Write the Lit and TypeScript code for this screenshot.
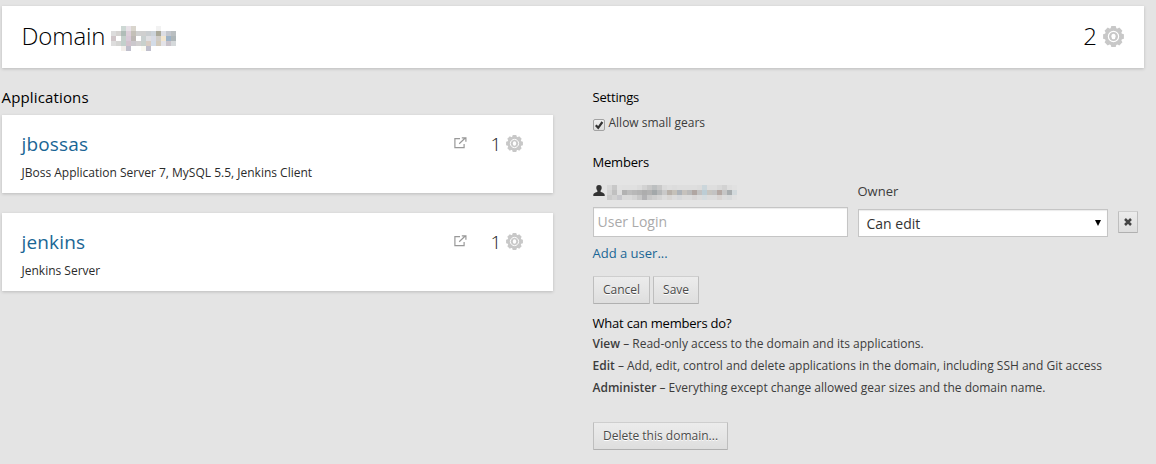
import { LitElement, html, css, svg } from "lit";
import { customElement, property } from "lit/decorators.js";

const MOSAIC_DOMAIN = [
  ". . cdd8d4 e8e2e8 d9d5cd . . . . f2f2f2 . . .",
  "dcdcdc d5d3d1 b0bdb8 dccfd9 c4c0b8 d0d0d0 cfcfcf c9cdd0 ccd3da aba99a dcdde4 c3c6cd b9bec0",
  "d0c6c9 . c5d0cb d8cad8 bdb8b5 . c9d0d0 dfdfe2 d8dbe5 d0cdc8 f3e6cf 9db3c8 aeb6b8",
  "dddddd d5d5d3 c3d0cc d3c3cd cbc8cd d2d0d0 c8d0cc d8ccc3 d3dce8 d3cbbd e3e3e8 c9c3ca d5d9db",
  ". . f3efeb c0bfcc . . fbfaf2 c0bfcc . . . . .",
];
const MOSAIC_USER = [
  "d9d9d9 c8c8c8 e1e1e1 e0e0e0 e0e0e0 e0e0e0 dcdcdc d2d2d2 c8c8c8 bcbfc0 c8c8c8 dadada dedede dcdcdc dedede dedede dedede dedede dcdcdc cbd6db dedede dedede d9d9d9 d2d2d2 dedede e1e1e1",
  "d4d4d4 c0c0c0 dedede b2b2b2 bdbdbd b8b8b8 b4b4b4 adadad b2b2b2 a3a8aa b6b8b9 c9c9c9 b8b1aa c5c1b9 adb3b9 c6c2bd bababa b0a6a2 c2c2c2 bccdd5 c7c5c0 c3c3c3 b4a8a3 c6c6c6 a8adaf d2d9dc",
  "cbcbcb d2d2d2 c8c8cc dadada dadada d4d4d4 c8c8c8 b2b2b4 c8c8c8 cecece d4d4d4 dcdcdc d8d6d4 dcdcdc d6d8da dcdcdc dcdcdc d8d6d6 dcdcdc d5dcdf dcdcdc dcdcdc d8d4d2 dcdcdc d8dadb e1e1e1",
];

@customElement("mosaic-text")
class MosaicText extends LitElement {
  @property({ attribute: false }) rows: string[] = [];
  @property({ type: Number }) cell = 5;
  static styles = css`:host { display: block; } svg { display: block; }`;
  render() {
    const grid = this.rows.map((r) => r.split(" "));
    const c = this.cell;
    return html`<svg width=${(grid[0]?.length ?? 0) * c} height=${grid.length * c} shape-rendering="crispEdges">
      ${grid.map((r, y) => r.map((f, x) => f === "." ? null : svg`<rect x=${x * c} y=${y * c} width=${c} height=${c} fill=${"#" + f}></rect>`))}
    </svg>`;
  }
}

const gear = (size: number) => html`<svg class="gear" width=${size} height=${size} viewBox="-10.5 -10.5 21 21">
  <g fill="#c8c8c8">
    ${[0, 45, 90, 135].map((a) => svg`<path d="M-2.2-10.4H2.2L3.2-7V7L2.2 10.4H-2.2L-3.2 7V-7Z" transform="rotate(${a})"></path>`)}
  </g>
  <circle r="8.7" fill="#c8c8c8"></circle>
  <circle r="5.1" fill="#c8c8c8" stroke="#fff" stroke-width="1.2"></circle>
  <ellipse rx="2.1" ry="2.7" fill="#fff"></ellipse>
</svg>`;

@customElement("app-root")
class AppRoot extends LitElement {
  static styles = css`
    :host { display: block; box-sizing: border-box; height: 464px; overflow: hidden; background: #e4e4e4; padding: 6px 12px 0 2px; color: #3c3c3c; font: 12px/22px "Open Sans", sans-serif; text-indent: -.5px; }
    * { box-sizing: border-box; }
    .card { background: #fff; box-shadow: 0 1px 3px rgba(0, 0, 0, .18); }
    .header { height: 62px; display: flex; align-items: center; padding: 0 20px 2px; color: #000; font-size: 24px; font-weight: 300; line-height: 30px; }
    .title { width: 83px; letter-spacing: -.1px; }
    .header mosaic-text { margin: 5px auto 0 6px; }
    .gear { display: block; flex: none; }
    .header .gear { margin-left: 6px; }
    .total { text-indent: .5px; }
    .columns { display: grid; grid-template-columns: 551px 1fr; column-gap: 40px; }
    h2 { margin: 0; font-weight: 400; color: #000; }
    .left h2 { font-size: 15px; line-height: 20px; margin: 19px 0 8px; letter-spacing: .15px; }
    .app { height: 78px; padding: 16px 30px 0 20px; margin-bottom: 20px; }
    .row { display: flex; align-items: center; height: 25px; }
    .name { font-size: 19px; color: #1a6695; margin-right: auto; letter-spacing: .15px; }
    .link { margin-top: -1px; }
    .count { font-size: 19px; font-weight: 300; color: #222; width: 10px; margin: 0 6px 0 23px; text-indent: .5px; }
    .stack { line-height: 18px; margin-top: 8px; color: #2b2b2b; }
    .right h2 { font-size: 13px; line-height: 20px; letter-spacing: -.2px; }
    .settings { margin-top: 19px !important; }
    .check { display: flex; align-items: flex-start; height: 20px; margin: 5px 0 20px; line-height: 22px; }
    .box { width: 12px; height: 12px; margin: 7px 4px 0 0; border: 1px solid #a2a2a2; border-radius: 2px; background: linear-gradient(#efefef, #ddd); }
    .box svg { display: block; overflow: visible; }
    .members { display: grid; grid-template-columns: 255px 250px 20px; column-gap: 10px; align-items: center; }
    .user { display: flex; height: 35px; padding-top: 13px; }
    .user mosaic-text { margin: 0 0 0 2px; }
    .owner { font-size: 13px; height: 35px; padding-top: 8px; line-height: 22px; }
    .field { background: #fff; border: 1px solid #c5c5c5; box-shadow: inset 0 1px 1px rgba(0,0,0,.08); height: 30px; font-size: 14px; line-height: 28px; padding-left: 4px; color: #aaa; }
    .select { height: 28px; line-height: 28px; padding: 0 6px 0 8px; color: #333; display: flex; justify-content: space-between; margin-top: 1px; }
    .arrow { margin-top: 10px; }
    .btn { display: inline-flex; align-items: center; justify-content: center; height: 28px; padding: 0 9px; border: 1px solid #bebebe; border-top-color: #cecece; border-bottom-color: #b0b0b0; border-radius: 1px; background: linear-gradient(#ececec, #dedede); color: #4a4a4a; text-shadow: 0 1px 0 #fff; text-indent: 0; }
    .x { width: 20px; height: 22px; padding: 0; }
    .add { display: block; font-size: 13px; color: #1a6695; line-height: 20px; margin: 6px 0 13px; }
    .actions { display: flex; gap: 3px; }
    .help { margin-top: 9px !important; }
    p { margin: 0; white-space: nowrap; }
    b { font-weight: 600; }
    .delete { margin-top: 23px; }
  `;

  private apps = [
    { name: "jbossas", stack: "JBoss Application Server 7, MySQL 5.5, Jenkins Client" },
    { name: "jenkins", stack: "Jenkins Server" },
  ];

  render() {
    return html`
      <div class="card header"><span class="title">Domain</span><mosaic-text .rows=${MOSAIC_DOMAIN}></mosaic-text><span class="total">2</span>${gear(21)}</div>
      <div class="columns">
        <div class="left">
          <h2>Applications</h2>
          ${this.apps.map((a) => html`<div class="card app">
            <div class="row"><span class="name">${a.name}</span>
              <svg class="link" width="13" height="12" viewBox="0 0 13 12" fill="none" stroke="#999" stroke-width="1.2"><path d="M6 1.6H.9V10.6H10.1V7M5.2 6.8L11.2 1M7.8.8H11.9V4.7"></path></svg>
              <span class="count">1</span>${gear(17)}</div>
            <div class="stack">${a.stack}</div>
          </div>`)}
        </div>
        <div class="right">
          <h2 class="settings">Settings</h2>
          <div class="check"><span class="box"><svg width="10" height="10"><path d="M1.8 5.2L4.2 7.8L8.4 2" fill="none" stroke="#333" stroke-width="2.2"></path></svg></span>Allow small gears</div>
          <h2>Members</h2>
          <div class="members">
            <div class="user"><svg width="12" height="11" viewBox="0 0 12 11"><path d="M6 0C8 0 8.8 1.3 8.7 3C8.6 4.6 7.9 5.3 7.4 6C7.3 7.5 11.7 7.3 11.7 10V11H.3V10C.3 7.3 4.7 7.5 4.6 6C4.1 5.3 3.4 4.6 3.3 3C3.2 1.3 4 0 6 0Z" fill="#333"></path></svg><mosaic-text .rows=${MOSAIC_USER}></mosaic-text></div>
            <div class="owner">Owner</div><span></span>
            <div class="field">User Login</div>
            <div class="field select">Can edit<svg class="arrow" width="6" height="6"><path d="M0 0H6L3 6Z" fill="#000"></path></svg></div>
            <div class="btn x"><svg width="8" height="8" viewBox="0 0 8 8"><path d="M1 1L7 7M7 1L1 7" stroke="#444" stroke-width="2.5"></path></svg></div>
          </div>
          <a class="add">Add a user...</a>
          <div class="actions"><span class="btn">Cancel</span><span class="btn">Save</span></div>
          <h2 class="help">What can members do?</h2>
          <p><b>View</b> – Read-only access to the domain and its applications.</p>
          <p><b>Edit</b> – Add, edit, control and delete applications in the domain, including SSH and Git access</p>
          <p><b>Administer</b> – Everything except change allowed gear sizes and the domain name.</p>
          <span class="btn delete">Delete this domain...</span>
        </div>
      </div>`;
  }
}
